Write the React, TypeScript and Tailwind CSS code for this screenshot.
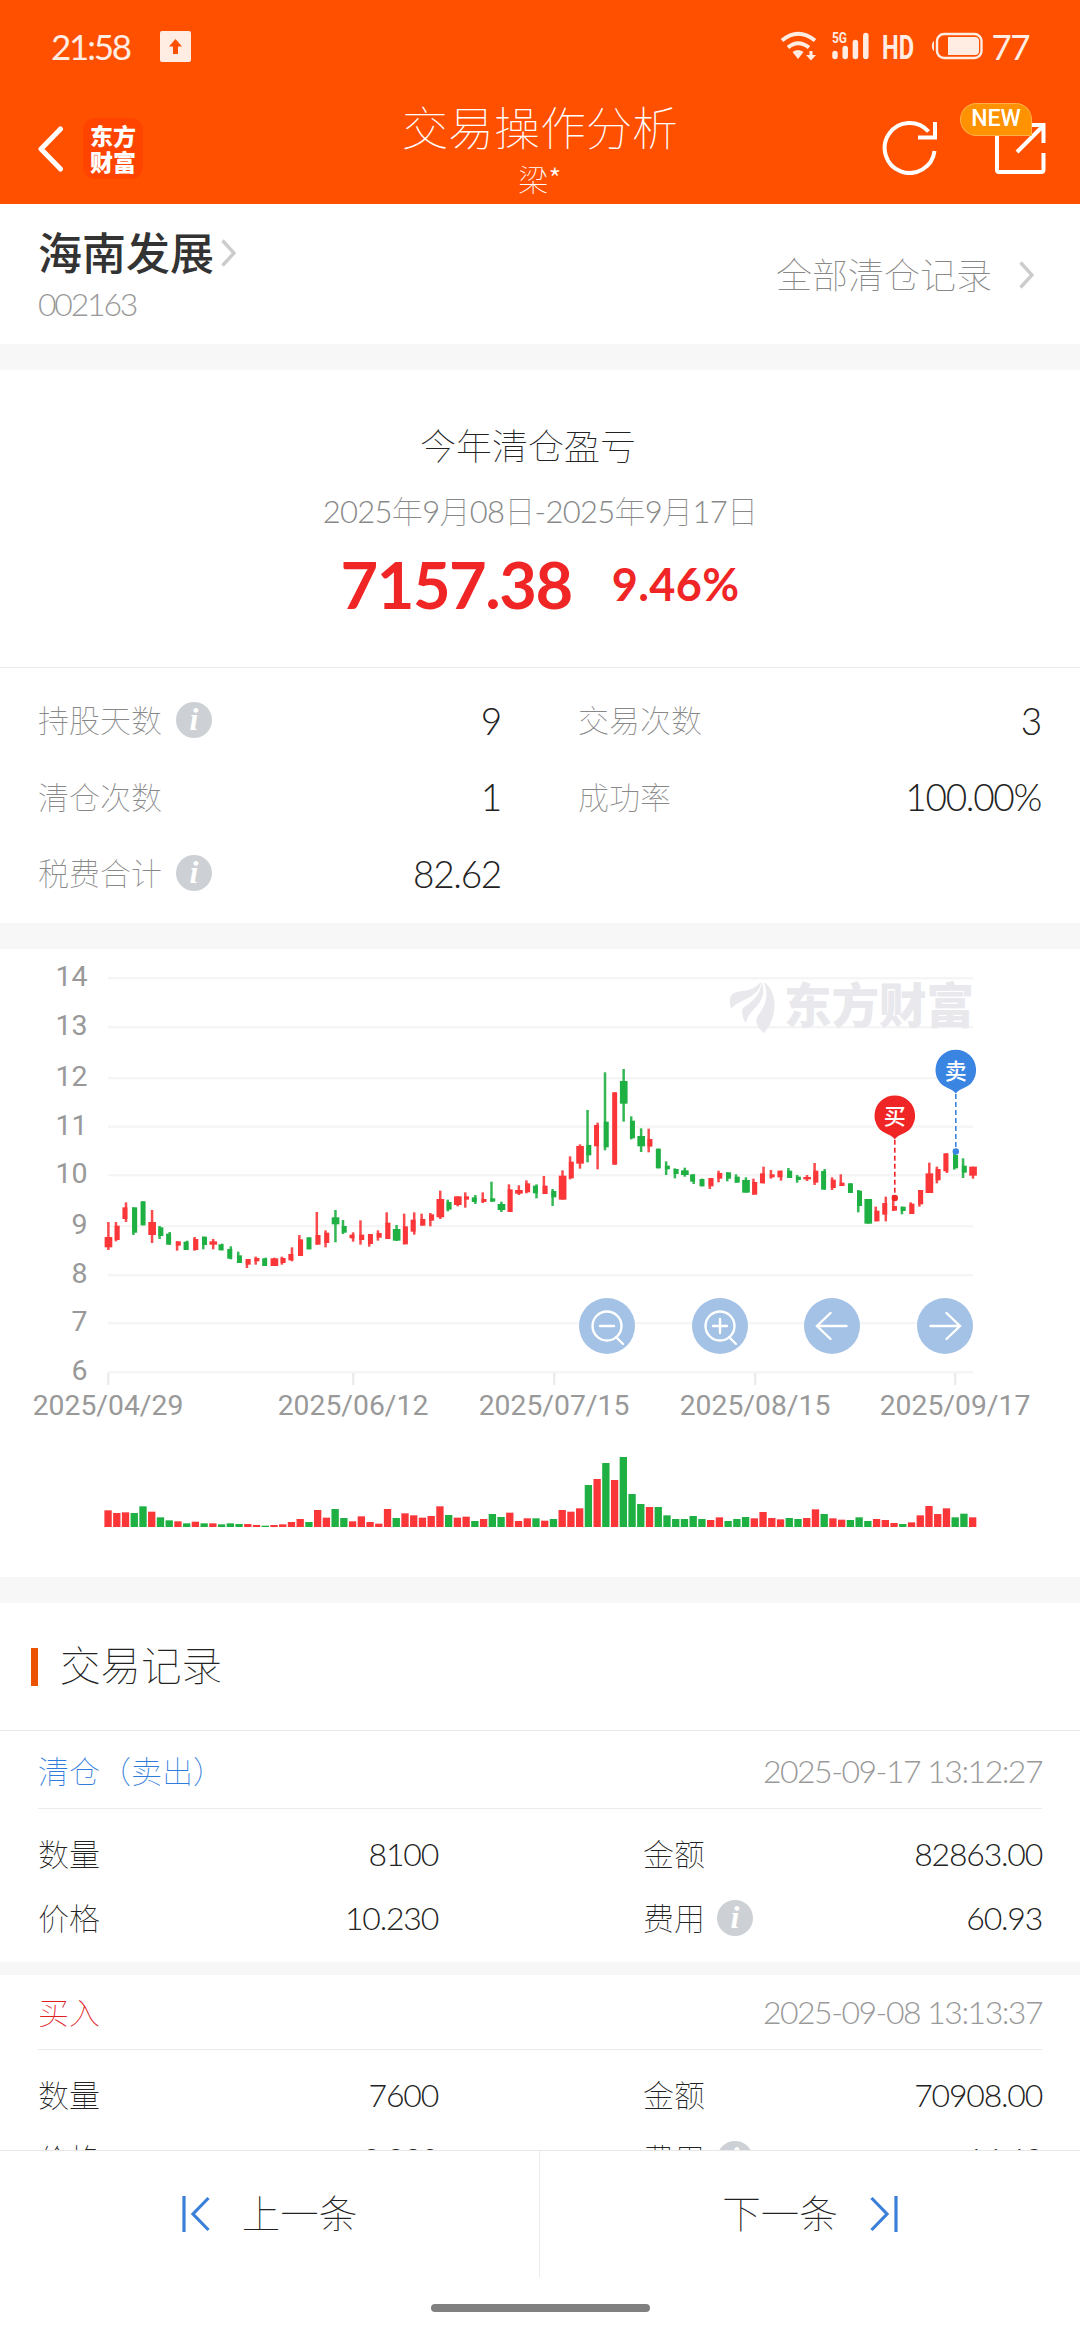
import type { ReactNode } from 'react';
import { clsx } from 'clsx';

type Side = 'c' | 'l' | 'r' | 'n';
type Candle = [up: 0 | 1, side: Side, high: number, low: number, top: number, bottom: number];

// One entry per trading day, in thirds of a pixel from the top of the plot.
// side: where the wick sits against the body (c = centred on a wide body, n = no visible wick)
const candles: Candle[] = [
  [1, 'c', 546, 630, 591, 622], [1, 'l', 546, 604, 557, 600], [1, 'r', 487, 546, 502, 537],
  [0, 'l', 502, 585, 502, 578], [0, 'n', 484, 556, 484, 556], [1, 'c', 510, 609, 546, 585],
  [0, 'l', 558, 597, 562, 588], [0, 'r', 576, 614, 581, 614], [1, 'l', 604, 632, 604, 617],
  [0, 'r', 602, 630, 605, 630], [1, 'l', 591, 632, 597, 630], [0, 'l', 590, 628, 590, 615],
  [1, 'c', 597, 628, 604, 614], [0, 'r', 611, 631, 613, 631], [0, 'r', 619, 658, 627, 656],
  [0, 'l', 635, 669, 646, 669], [1, 'l', 657, 684, 657, 674], [1, 'l', 650, 674, 654, 664],
  [0, 'r', 653, 678, 655, 678], [1, 'c', 653, 678, 655, 678], [1, 'l', 650, 674, 654, 669],
  [1, 'r', 622, 664, 642, 661], [1, 'l', 585, 648, 598, 648], [0, 'n', 592, 628, 592, 628],
  [1, 'l', 516, 614, 585, 614], [1, 'l', 571, 622, 578, 609], [0, 'c', 510, 607, 532, 553],
  [0, 'l', 540, 582, 558, 578], [1, 'r', 577, 605, 584, 595], [1, 'l', 541, 614, 584, 600],
  [1, 'l', 582, 620, 582, 612], [1, 'l', 571, 602, 579, 593], [1, 'l', 517, 597, 548, 597],
  [0, 'c', 555, 603, 567, 602], [1, 'l', 521, 613, 559, 613], [1, 'r', 517, 584, 539, 575],
  [1, 'l', 521, 557, 537, 557], [1, 'l', 519, 559, 523, 542], [1, 'c', 452, 537, 477, 532],
  [0, 'l', 479, 514, 486, 509], [1, 'c', 469, 499, 469, 495], [1, 'l', 457, 503, 469, 479],
  [0, 'r', 465, 492, 472, 486], [1, 'l', 457, 489, 477, 486], [0, 'l', 425, 485, 475, 485],
  [0, 'c', 485, 516, 492, 510], [1, 'l', 433, 516, 448, 516], [1, 'c', 436, 465, 450, 461],
  [1, 'l', 421, 460, 430, 457], [0, 'r', 433, 475, 437, 460], [1, 'l', 408, 462, 437, 462],
  [0, 'l', 447, 498, 453, 472], [1, 'c', 391, 479, 407, 479], [1, 'l', 349, 418, 365, 415],
  [1, 'c', 313, 386, 318, 371], [0, 'l', 210, 367, 315, 346], [1, 'r', 248, 388, 255, 319],
  [0, 'l', 97, 331, 245, 322], [1, 'n', 157, 374, 157, 374], [0, 'c', 87, 245, 123, 191],
  [0, 'l', 229, 298, 242, 295], [0, 'c', 265, 336, 288, 319], [1, 'l', 266, 337, 297, 320],
  [0, 'n', 326, 385, 326, 385], [0, 'l', 364, 405, 377, 388], [0, 'l', 385, 415, 387, 402],
  [0, 'c', 383, 410, 391, 405], [0, 'r', 403, 432, 403, 425], [0, 'n', 416, 439, 417, 439],
  [1, 'l', 414, 447, 414, 439], [1, 'l', 392, 427, 399, 416], [0, 'l', 397, 424, 397, 416],
  [0, 'l', 403, 428, 410, 428], [0, 'c', 412, 458, 420, 458], [1, 'l', 416, 464, 426, 464],
  [1, 'r', 380, 430, 400, 430], [1, 'l', 390, 416, 403, 412], [1, 'r', 392, 422, 392, 412],
  [0, 'l', 384, 414, 392, 414], [0, 'l', 405, 428, 410, 420], [1, 'c', 405, 423, 411, 418],
  [1, 'l', 369, 435, 392, 428], [0, 'r', 387, 449, 393, 449], [1, 'l', 412, 450, 419, 444],
  [1, 'l', 403, 438, 428, 438], [0, 'n', 430, 459, 430, 459], [0, 'l', 450, 517, 452, 498],
  [0, 'c', 477, 551, 477, 551], [1, 'l', 500, 544, 512, 544], [1, 'r', 470, 544, 489, 524],
  [1, 'l', 465, 513, 498, 512], [0, 'l', 500, 523, 500, 513], [1, 'l', 487, 522, 491, 522],
  [1, 'l', 450, 500, 450, 493], [1, 'c', 368, 459, 400, 459], [1, 'l', 380, 430, 387, 421],
  [1, 'r', 340, 399, 340, 394], [0, 'l', 330, 389, 345, 385], [0, 'l', 355, 414, 377, 398],
  [1, 'c', 380, 416, 380, 407],
];

// Bar heights, same unit and order as the candles
const volumes = [
  50, 42, 44, 42, 62, 46, 29, 20, 17, 11, 16, 11, 11, 8, 11, 9, 9, 6, 4, 6,
  8, 15, 24, 15, 51, 28, 54, 27, 17, 32, 15, 10, 54, 27, 41, 35, 28, 33, 62, 36,
  28, 31, 18, 24, 39, 30, 43, 18, 26, 26, 19, 24, 51, 46, 56, 126, 144, 192, 141, 210,
  99, 69, 60, 60, 35, 24, 24, 33, 24, 21, 29, 18, 24, 30, 26, 45, 27, 23, 27, 24,
  27, 53, 39, 26, 22, 21, 29, 18, 24, 21, 12, 9, 14, 35, 63, 39, 56, 29, 40, 29,
];

const gridLines = [
  { label: '14', y: 29 },
  { label: '13', y: 78 },
  { label: '12', y: 129 },
  { label: '11', y: 177.5 },
  { label: '10', y: 226 },
  { label: '9', y: 277 },
  { label: '8', y: 326 },
  { label: '7', y: 374 },
  { label: '6', y: 423 },
];

const dates = [
  { label: '2025/04/29', x: 108 },
  { label: '2025/06/12', x: 353 },
  { label: '2025/07/15', x: 554 },
  { label: '2025/08/15', x: 755 },
  { label: '2025/09/17', x: 955 },
];

const STEP = 26.2;
const RED = '#fa3639';
const GREEN = '#1eb043';

const bodyBox = {
  c: { x: -11, w: 23 },
  l: { x: -7, w: 15 },
  r: { x: -10, w: 15 },
  n: { x: -8, w: 15 },
};
const wickX = { c: -3.5, l: -7, r: -3, n: -4 };

function Chevron({ className }: { className?: string }) {
  return (
    <svg className={className} width="15" height="28" viewBox="0 0 15 28" fill="none" stroke="#cccccc" strokeWidth="3.4">
      <path d="M1.5 1.5 L13 14 L1.5 26.5" />
    </svg>
  );
}

function InfoIcon() {
  return (
    <span className="flex size-9 shrink-0 items-center justify-center rounded-full bg-[#cdd0d5] font-[family-name:'Liberation_Serif',serif] text-[32px] leading-none font-bold text-white italic">
      <span className="-mt-0.5">i</span>
    </span>
  );
}

function StatusBar() {
  return (
    <div className="flex h-[92px] items-center pr-[51px] pl-[51px] text-[#ffece3]">
      <span className="w-[109px] font-[family-name:Lato,sans-serif] text-[35px] tracking-[-2.2px]">21:58</span>
      <svg width="31" height="31" viewBox="0 0 31 31">
        <rect width="31" height="31" rx="2" fill="#ffece3" />
        <path d="M15.5 8 L22 15.5 H18 V23 H13 V15.5 H9 Z" fill="#ff5000" />
      </svg>
      <div className="ml-auto flex items-center">
        <svg width="38" height="30" viewBox="0 0 38 30" fill="none" stroke="#ffece3" strokeWidth="4">
          <path d="M2 9.5 Q18 -4 35 9.5" />
          <path d="M8 16.5 Q18 8 29 16.5" />
          <path d="M12.5 21 Q18 17 23.5 21 L18 28 Z" fill="#ffece3" stroke="none" />
          <path d="M31 20 V25" strokeWidth="3" />
          <path d="M26 24 H36 L31 29.5 Z" fill="#ffece3" stroke="none" />
        </svg>
        <svg className="ml-3.5" width="38" height="38" viewBox="0 -4 38 38">
          <text x="0" y="11.5" fontSize="14" fontWeight="700" textLength="15" lengthAdjust="spacingAndGlyphs" fontFamily="Roboto" fill="#ffece3">
            5G
          </text>
          <g stroke="#ffece3" strokeWidth="5.5" strokeLinecap="round">
            <path d="M3 22.5 V25.5" />
            <path d="M13.2 17.5 V25.5" />
            <path d="M23.4 11.5 V25.5" />
            <path d="M33.8 4.5 V25.5" />
          </g>
        </svg>
        <svg className="ml-3" width="33" height="44" viewBox="0 -7 33 44">
          <text x="0" y="27.5" fontSize="34" fontWeight="700" textLength="32" lengthAdjust="spacingAndGlyphs" fontFamily="Roboto" fill="#ffece3">
            HD
          </text>
        </svg>
        <svg className="ml-4" width="52" height="28" viewBox="0 0 52 28">
          <path d="M2.5 9.5 Q0 14 2.5 18.5 Z" fill="#ffece3" stroke="#ffece3" />
          <rect x="6" y="2" width="44.5" height="24" rx="7" fill="none" stroke="#ffece3" strokeWidth="2.4" />
          <path d="M17 5 H44 Q48 5 48 9 V19 Q48 23 44 23 H17 Z" fill="#ffece3" />
        </svg>
        <span className="ml-2 font-[family-name:Lato,sans-serif] text-[35px] leading-none tracking-[-1.5px]">77</span>
      </div>
    </div>
  );
}

function NavBar() {
  return (
    <div className="relative flex h-[112px] items-start">
      <svg className="mt-[34px] ml-[37px]" width="27" height="46" viewBox="0 0 27 46" fill="none" stroke="white" strokeWidth="5" strokeLinecap="round" strokeLinejoin="round">
        <path d="M23.5 3 L4 23 L23.5 43" />
      </svg>
      <div className="mt-[26px] ml-[19px] flex h-[61px] w-[60px] flex-col items-center justify-center rounded-xl bg-[#ff4400] text-[23px] leading-[26px] font-black text-white">
        <span>东方</span>
        <span>财富</span>
      </div>
      <div className="absolute inset-x-0 top-2 flex flex-col items-center font-thin text-white">
        <h1 className="text-[46px] leading-[56px]">交易操作分析</h1>
        <p className="mt-1 text-[30px] leading-9">
          梁<span className="font-[family-name:'Noto_Sans_CJK_SC',sans-serif] font-light">*</span>
        </p>
      </div>
      <div className="ml-auto flex pr-[33px]">
        <svg className="mt-[27px]" width="56" height="56" viewBox="0 0 56 56" fill="none" stroke="white" strokeWidth="4">
          <path d="M52.5 32 A25 25 0 1 1 46.5 12.5" />
          <path d="M53 3 V18.5 H36" />
        </svg>
        <div className="relative ml-[55px]">
          <svg className="mt-[30px]" width="54" height="54" viewBox="0 0 54 54" fill="none" stroke="white" strokeWidth="4">
            <path d="M4 8 V48 Q4 50 6 50 H48 Q50.5 50 50.5 47.5 V31" />
            <path d="M33 3 H50.5 V21" />
            <path d="M49 5 L24 30" />
          </svg>
          <span className="absolute top-[11px] -left-[33px] flex h-[33px] w-[72px] items-center justify-center rounded-full rounded-br-[3px] border border-[#ffb04a] bg-[#ff9200] font-[family-name:Roboto,sans-serif] text-[23px] font-medium text-white">
            NEW
          </span>
        </div>
      </div>
    </div>
  );
}

function StockHeader() {
  return (
    <section className="flex h-[140px] justify-between bg-white pr-[46px] pl-[38px]">
      <div className="pt-[22px]">
        <div className="flex h-[54px] items-center">
          <h2 className="text-[44px] leading-none font-medium text-[#333]">海南发展</h2>
          <Chevron className="ml-[7px]" />
        </div>
        <p className="mt-1.5 text-[32px] leading-9 font-light tracking-[-2.2px] text-[#999]">002163</p>
      </div>
      <div className="flex items-center pt-0.5">
        <span className="text-[36px] font-thin text-[#888]">全部清仓记录</span>
        <Chevron className="ml-[27px]" />
      </div>
    </section>
  );
}

// Latin digits are drawn one weight up, as Lato's thinnest cut is lighter than the Chinese one
function DateRange({ text }: { text: string }) {
  return (
    <>
      {text.split(/([年月日])/).map((part, i) => (
        <span key={i} className={clsx(i % 2 === 0 && 'font-light')}>
          {part}
        </span>
      ))}
    </>
  );
}

function Summary() {
  return (
    <section className="flex h-[297px] flex-col items-center bg-white pt-[51px]">
      <h3 className="pr-6 text-[36px] leading-[50px] font-thin text-[#222]">今年清仓盈亏</h3>
      <p className="mt-[15px] text-[31px] leading-[50px] font-thin tracking-[-0.7px] text-[#888]">
        <DateRange text="2025年9月08日-2025年9月17日" />
      </p>
      <div className="mt-3.5 flex h-[70px] items-center gap-10 font-bold text-[#f02626]">
        <span className="text-[65px] tracking-[-1.5px]">7157.38</span>
        <span className="text-[45px] tracking-[0.4px]">9.46%</span>
      </div>
    </section>
  );
}

function Stat({ label, value, info }: { label: string; value: string; info?: boolean }) {
  return (
    <div className="flex h-[76.5px] items-center justify-between">
      <span className="flex items-center gap-3.5 text-[31px] font-thin text-[#888]">
        {label}
        {info && <InfoIcon />}
      </span>
      <span className="text-[37px] font-light tracking-[-1.3px] text-[#222]">{value}</span>
    </div>
  );
}

function Stats() {
  return (
    <section className="grid h-[256px] grid-cols-[463px_463px] content-start gap-x-[77px] border-t border-[#ebebeb] bg-white px-[38px] pt-[14px]">
      <Stat label="持股天数" value="9" info />
      <Stat label="交易次数" value="3" />
      <Stat label="清仓次数" value="1" />
      <Stat label="成功率" value="100.00%" />
      <Stat label="税费合计" value="82.62" info />
    </section>
  );
}

function Marker({ x, top, dot, color, text }: { x: number; top: number; dot: number; color: string; text: string }) {
  const cy = top + 20.5;
  return (
    <g>
      <path d={`M${x} ${top + 44} V${dot}`} stroke={color} strokeWidth="1.6" strokeDasharray="5 3" />
      <circle cx={x} cy={dot} r="3.2" fill={color} />
      <path
        d={`M${x} ${top + 43.5} C${x - 3} ${top + 39} ${x - 12} ${cy + 17} ${x - 16} ${cy + 12} A20.3 20.3 0 1 1 ${x + 16} ${cy + 12} C${x + 12} ${cy + 17} ${x + 3} ${top + 39} ${x} ${top + 43.5} Z`}
        fill={color}
      />
      <text x={x} y={cy + 8} fontSize="22" fontWeight="500" textAnchor="middle" fill="white">
        {text}
      </text>
    </g>
  );
}

function ZoomGlyph({ plus }: { plus?: boolean }) {
  return (
    <>
      <circle cx="28" cy="28" r="14.5" />
      <path d="M37 39 L44 46 M21 28 H35" />
      {plus && <path d="M28 21 V35" />}
    </>
  );
}

function ChartButton({ label, children }: { label: string; children: ReactNode }) {
  return (
    <button aria-label={label} className="size-14 rounded-full bg-[#a4c2e5]">
      <svg width="56" height="56" viewBox="0 0 56 56" fill="none" stroke="white" strokeWidth="2.4" strokeLinecap="round">
        {children}
      </svg>
    </button>
  );
}

function Chart() {
  return (
    <section className="relative h-[628px] bg-white">
      <svg width="1080" height="628" viewBox="0 0 1080 628">
        {gridLines.map((line) => (
          <g key={line.label}>
            <rect x="108" y={line.y - 1} width="865" height="2.4" fill="#f5f5f6" />
            <text x="87.5" y={line.y + 8} fontSize="28.5" textAnchor="end" fontFamily="Roboto" fill="#999">
              {line.label}
            </text>
          </g>
        ))}
        {dates.map((date) => (
          <g key={date.label}>
            <rect x={date.x - 1} y="424" width="2.4" height="12" fill="#ececee" />
            <text x={date.x} y="466" fontSize="28.3" textAnchor="middle" fontFamily="Roboto" fill="#999">
              {date.label}
            </text>
          </g>
        ))}

        {/* Watermark */}
        <g fill="#e8e8ed">
          <path d="M730 55 C729 45 733 43 743 42 C752 41 757 37 761 33 C760 43 752 47 744 51 C738 54 733 57 731 60 Z" />
          <path d="M762 33 C765 44 762 51 757 57 C751 63 748 66 746 74 C742 68 741 63 743 59 C750 54 760 48 762 33 Z" />
          <path d="M764 33 C778 43 778 68 764 84 C756 77 754 72 759 65 C766 56 769 46 764 33 Z" />
          <text x="784" y="74" fontSize="47.5" fontWeight="900">
            东方财富
          </text>
        </g>

        <g transform="translate(108.3 91) scale(0.33333)">
          {candles.map(([up, side, high, low, top, bottom], i) => (
            <g key={i} fill={up ? RED : GREEN}>
              <rect x={i * STEP + wickX[side]} y={high} width="7.5" height={low - high} opacity="0.9" />
              <rect x={i * STEP + bodyBox[side].x} y={top} width={bodyBox[side].w} height={bottom - top} />
            </g>
          ))}
        </g>
        <g transform="translate(104.4 578) scale(0.33333)">
          {volumes.map((height, i) => (
            <rect key={i} x={i * STEP} y={-height} width="22" height={height} fill={candles[i][0] ? RED : GREEN} />
          ))}
        </g>

        <Marker x={894.8} top={146.7} dot={249} color="#f02626" text="买" />
        <Marker x={955.8} top={101} dot={202.5} color="#3a84e2" text="卖" />
      </svg>

      <div className="absolute top-[349px] left-[579px] flex gap-[56.5px]">
        <ChartButton label="缩小">
          <ZoomGlyph />
        </ChartButton>
        <ChartButton label="放大">
          <ZoomGlyph plus />
        </ChartButton>
        <ChartButton label="左移">
          <path d="M42.5 28 H13 M26.5 15 L13 28 L26.5 41" />
        </ChartButton>
        <ChartButton label="右移">
          <path d="M13.5 28 H43 M29.5 15 L43 28 L29.5 41" />
        </ChartButton>
      </div>
    </section>
  );
}

type TradeRecord = {
  title: string;
  time: string;
  sell: boolean;
  quantity: string;
  amount: string;
  price: string;
  fee: string;
};

const records: TradeRecord[] = [
  { title: '清仓（卖出）', time: '2025-09-17 13:12:27', sell: true, quantity: '8100', amount: '82863.00', price: '10.230', fee: '60.93' },
  { title: '买入', time: '2025-09-08 13:13:37', sell: false, quantity: '7600', amount: '70908.00', price: '9.330', fee: '16.69' },
];

function Field({ label, value, info }: { label: string; value: string; info?: boolean }) {
  return (
    <div className="flex h-16 items-center justify-between text-[#222]">
      <span className="flex items-center gap-3 text-[31px] font-thin">
        {label}
        {info && <InfoIcon />}
      </span>
      <span className="text-[32px] font-light tracking-[-1.2px]">{value}</span>
    </div>
  );
}

function Record({ record }: { record: TradeRecord }) {
  return (
    <div className="h-[228px] shrink-0 bg-white px-[38px]">
      <div className="flex h-[75px] items-center justify-between border-b border-[#ebebeb]">
        <span className={clsx('text-[31px] font-thin', record.sell ? 'text-[#2f7bdc]' : 'text-[#e0201f]')}>{record.title}</span>
        <span className="text-[32px] font-light tracking-[-1.5px] text-[#999]">{record.time}</span>
      </div>
      <div className="grid grid-cols-[400px_399px] gap-x-[205px] pt-[13px]">
        <Field label="数量" value={record.quantity} />
        <Field label="金额" value={record.amount} />
        <Field label="价格" value={record.price} />
        <Field label="费用" value={record.fee} info />
      </div>
    </div>
  );
}

function Footer() {
  return (
    <footer className="h-[190px] shrink-0 border-t border-[#e8e8e8] bg-white">
      <div className="grid h-[126px] grid-cols-2 text-[38.5px] font-thin text-[#222]">
        <button className="flex items-center justify-center gap-8 border-r border-[#ebebeb]">
          <svg width="28" height="36" viewBox="0 0 28 36" fill="none" stroke="#3a80d8" strokeWidth="3.2">
            <path d="M2 0 V36 M26.5 2 L11 18 L26.5 34" />
          </svg>
          上一条
        </button>
        <button className="flex items-center justify-center gap-8">
          下一条
          <svg width="28" height="36" viewBox="0 0 28 36" fill="none" stroke="#3a80d8" strokeWidth="3.2">
            <path d="M26 0 V36 M1.5 2 L17 18 L1.5 34" />
          </svg>
        </button>
      </div>
      <div className="mx-auto mt-[27px] h-2 w-[219px] rounded-full bg-[#808080]" />
    </footer>
  );
}

export default function App() {
  return (
    <div className="flex h-[2340px] w-[1080px] flex-col overflow-hidden bg-[#f7f7f8] font-[family-name:Lato,'Noto_Sans_CJK_SC',sans-serif]">
      <header className="h-[204px] shrink-0 bg-[#ff5000]">
        <StatusBar />
        <NavBar />
      </header>
      <main className="flex min-h-0 flex-1 flex-col overflow-hidden *:shrink-0">
        <StockHeader />
        <div className="mt-[26px]">
          <Summary />
          <Stats />
        </div>
        <div className="mt-[26px]">
          <Chart />
        </div>
        <div className="mt-[26px] flex flex-col gap-[13px]">
          <div className="bg-white">
            <div className="mb-[3px] flex h-[128px] items-center border-b border-[#ebebeb] pl-[31px]">
              <span className="h-[38px] w-[7px] bg-[#eb5300]" />
              <h3 className="ml-[22px] text-[40.5px] font-thin text-[#222]">交易记录</h3>
            </div>
            <Record record={records[0]} />
          </div>
          <Record record={records[1]} />
        </div>
      </main>
      <Footer />
    </div>
  );
}
